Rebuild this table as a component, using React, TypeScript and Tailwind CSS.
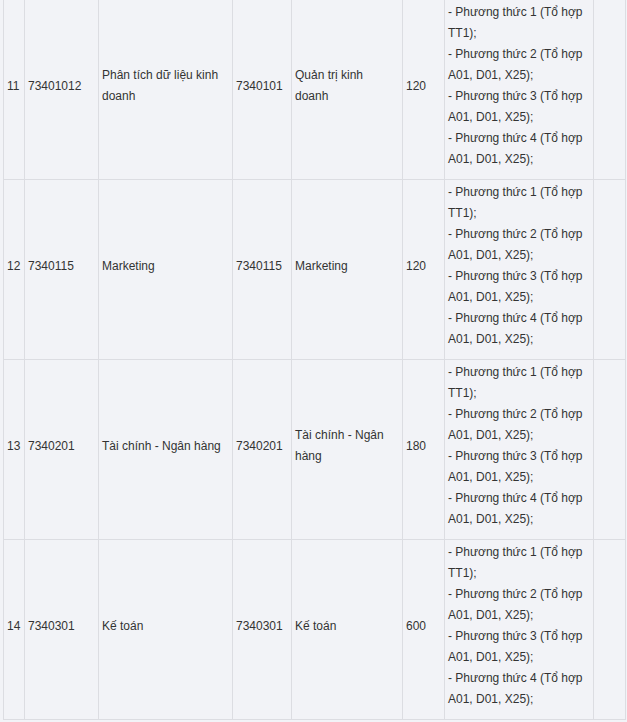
const methods = [
  '- Phương thức 1 (Tổ hợp TT1);',
  '- Phương thức 2 (Tổ hợp A01, D01, X25);',
  '- Phương thức 3 (Tổ hợp A01, D01, X25);',
  '- Phương thức 4 (Tổ hợp A01, D01, X25);',
];

const rows = [
  { stt: '11', code: '73401012', name: 'Phân tích dữ liệu kinh doanh', groupCode: '7340101', group: 'Quản trị kinh doanh', quota: '120' },
  { stt: '12', code: '7340115', name: 'Marketing', groupCode: '7340115', group: 'Marketing', quota: '120' },
  { stt: '13', code: '7340201', name: 'Tài chính - Ngân hàng', groupCode: '7340201', group: 'Tài chính - Ngân hàng', quota: '180' },
  { stt: '14', code: '7340301', name: 'Kế toán', groupCode: '7340301', group: 'Kế toán', quota: '600' },
];

const cell = 'border border-[#dcdde2] px-[3px] pt-[2px] pb-[9px] align-middle';

export default function App() {
  return (
    <div className="min-h-[722px] bg-[#f2f3f7] overflow-hidden">
      <table
        className="ml-[3px] mt-[-1px] w-[622px] table-fixed border-collapse text-[12px] leading-[21px] text-[#333333]"
        style={{ fontFamily: '"Liberation Sans", Arial, sans-serif' }}
      >
        <colgroup>
          <col className="w-[21px]" />
          <col className="w-[74px]" />
          <col className="w-[134px]" />
          <col className="w-[59px]" />
          <col className="w-[111px]" />
          <col className="w-[42px]" />
          <col className="w-[149px]" />
          <col className="w-[32px]" />
        </colgroup>
        <tbody>
          {rows.map((r) => (
            <tr key={r.stt}>
              <td className={cell}>{r.stt}</td>
              <td className={cell}>{r.code}</td>
              <td className={cell}>{r.name}</td>
              <td className={cell}>{r.groupCode}</td>
              <td className={cell}>{r.group}</td>
              <td className={cell}>{r.quota}</td>
              <td className={cell}>
                {methods.map((m) => (
                  <div key={m}>{m}</div>
                ))}
              </td>
              <td className={cell}></td>
            </tr>
          ))}
        </tbody>
      </table>
    </div>
  );
}
